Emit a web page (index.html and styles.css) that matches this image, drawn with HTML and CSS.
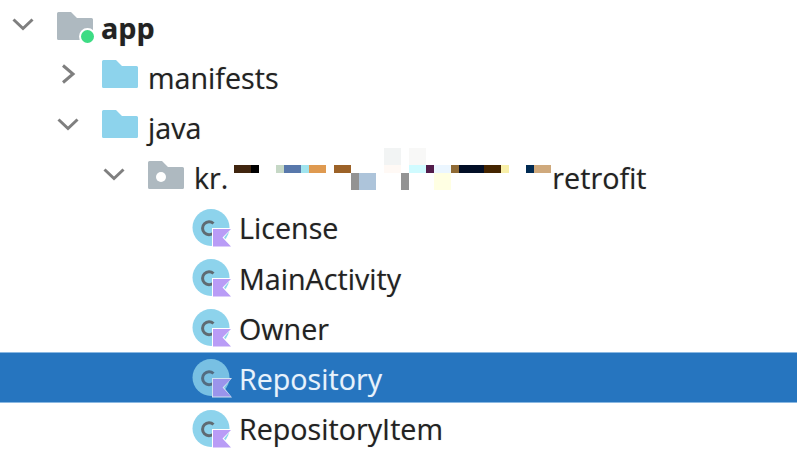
FILE: index.html
```html
<!DOCTYPE html>
<html lang="en">
<head>
    <meta charset="UTF-8">
    <title>Project tree</title>
    <link rel="stylesheet" href="styles.css">
</head>
<body>
<svg class="defs" width="0" height="0">
    <defs>
        <symbol id="folder" viewBox="0 0 36 28">
            <path d="M0 1.5Q0 0 1.5 0H14L20 6H34.5Q36 6 36 7.5V26.5Q36 28 34.5 28H1.5Q0 28 0 26.5Z"/>
        </symbol>
        <symbol id="down" viewBox="0 0 22 12">
            <path d="M1.5 1.5L11 10.5L20.5 1.5" fill="none" stroke="#7f7f7f" stroke-width="3"/>
        </symbol>
        <symbol id="right" viewBox="0 0 22 20">
            <path d="M6 1.5L16 10L6 18.5" fill="none" stroke="#7f7f7f" stroke-width="3"/>
        </symbol>
        <symbol id="kclass" viewBox="0 0 40 40">
            <circle cx="19" cy="18.5" r="18.5" fill="#8dd3ec"/>
            <path d="M21.5 14.5A6.5 6.5 0 1 0 21.5 24" fill="none" stroke="#5f6b72" stroke-width="3"/>
            <path d="M20 19H40L32 28.5L40 38.5H20Z" fill="#fff"/>
            <path d="M21 20H39L30.5 28.5L39 37.5H21Z" fill="#b99cf6"/>
        </symbol>
    </defs>
</svg>

<div class="tree">
    <div class="row depth0">
        <svg class="chevron"><use href="#down"/></svg>
        <span class="node module">
            <svg class="folder grey"><use href="#folder"/></svg>
            <span class="module-dot"></span>
        </span>
        <span class="label bold">app</span>
    </div>
    <div class="row depth1">
        <svg class="chevron"><use href="#right"/></svg>
        <span class="node">
            <svg class="folder blue"><use href="#folder"/></svg>
        </span>
        <span class="label">manifests</span>
    </div>
    <div class="row depth1">
        <svg class="chevron"><use href="#down"/></svg>
        <span class="node">
            <svg class="folder blue"><use href="#folder"/></svg>
        </span>
        <span class="label">java</span>
    </div>
    <div class="row depth2">
        <svg class="chevron"><use href="#down"/></svg>
        <span class="node">
            <svg class="folder grey"><use href="#folder"/></svg>
            <span class="package-hole"></span>
        </span>
        <span class="label">kr.</span>
        <svg class="mosaic" width="326" height="50" viewBox="0 0 326 50">
            <rect x="6" y="13" width="17" height="8" fill="#40250f"/>
            <rect x="23" y="13" width="8" height="8" fill="#000"/>
            <rect x="48" y="13" width="8" height="8" fill="#c6d8c6"/>
            <rect x="56" y="13" width="17" height="8" fill="#5878ab"/>
            <rect x="73" y="13" width="8" height="8" fill="#a0e4ee"/>
            <rect x="81" y="13" width="17" height="8" fill="#df9a50"/>
            <rect x="106" y="13" width="17" height="8" fill="#9c6228"/>
            <rect x="123" y="21" width="8" height="17" fill="#939393"/>
            <rect x="131" y="21" width="17" height="17" fill="#adc4da"/>
            <rect x="173" y="21" width="8" height="17" fill="#939393"/>
            <rect x="206" y="21" width="17" height="17" fill="#ffffe3"/>
            <rect x="156" y="-4" width="17" height="17" fill="#f2f4f4"/>
            <rect x="181" y="-4" width="17" height="17" fill="#f8f8f7"/>
            <rect x="156" y="13" width="17" height="8" fill="#fff9f5"/>
            <rect x="181" y="13" width="17" height="8" fill="#d0fbff"/>
            <rect x="198" y="13" width="8" height="8" fill="#521c4a"/>
            <rect x="206" y="13" width="17" height="8" fill="#ebf6ff"/>
            <rect x="223" y="13" width="8" height="8" fill="#8f6a35"/>
            <rect x="231" y="13" width="25" height="8" fill="#020e26"/>
            <rect x="256" y="13" width="17" height="8" fill="#442400"/>
            <rect x="273" y="13" width="8" height="8" fill="#f8efa8"/>
            <rect x="298" y="13" width="8" height="8" fill="#002a52"/>
            <rect x="306" y="13" width="17" height="8" fill="#cfa97c"/>
        </svg>
        <span class="label tail">retrofit</span>
    </div>
    <div class="row depth3">
        <svg class="kclass"><use href="#kclass"/></svg>
        <span class="label">License</span>
    </div>
    <div class="row depth3">
        <svg class="kclass"><use href="#kclass"/></svg>
        <span class="label">MainActivity</span>
    </div>
    <div class="row depth3">
        <svg class="kclass"><use href="#kclass"/></svg>
        <span class="label">Owner</span>
    </div>
    <div class="row depth3 selected">
        <svg class="kclass"><use href="#kclass"/></svg>
        <span class="label">Repository</span>
    </div>
    <div class="row depth3">
        <svg class="kclass"><use href="#kclass"/></svg>
        <span class="label">RepositoryItem</span>
    </div>
</div>
</body>
</html>
```

FILE: styles.css
```css
body {
    margin: 0;
    background-color: #fff;
    font-family: "Open Sans", "Noto Sans", sans-serif;
    color: #222;
    overflow: hidden;
}
.defs {
    position: absolute;
}
.tree {
    padding-top: 1px;
    width: 797px;
}
.row {
    display: flex;
    align-items: center;
    height: 50.2px;
    font-size: 28.7px;
}
.depth0 {
    padding-left: 12px;
}
.depth1 {
    padding-left: 57px;
}
.depth2 {
    padding-left: 103px;
}
.depth3 {
    padding-left: 192px;
}
.selected {
    background-color: #2675bf;
    color: #e8f2fb;
    box-shadow: inset 0 1px #8ab8e2, inset 0 -1px #8ab8e2;
}
.selected .kclass {
    opacity: 0.8;
}
.chevron {
    width: 22px;
    height: 20px;
    margin-right: 23px;
    margin-bottom: 5px;
    flex: none;
}
.node {
    position: relative;
    display: flex;
    flex: none;
    margin-bottom: 4px;
}
.module {
    margin-bottom: 0;
}
.folder {
    width: 36px;
    height: 28px;
    flex: none;
}
.grey {
    fill: #aeb9c0;
}
.blue {
    fill: #8dd3ec;
}
.module-dot {
    position: absolute;
    right: -3px;
    bottom: -5px;
    width: 13px;
    height: 13px;
    border: 2px solid #fff;
    border-radius: 50%;
    background-color: #3ddc84;
}
.package-hole {
    position: absolute;
    left: 8px;
    top: 11px;
    width: 10px;
    height: 10px;
    border-radius: 50%;
    background-color: #fff;
}
.kclass {
    width: 40px;
    height: 40px;
    flex: none;
    margin-right: 7px;
    margin-top: 4px;
}
.label {
    margin-left: 10px;
    margin-top: 2px;
    white-space: nowrap;
    text-shadow: 0 0 1px rgba(34, 34, 34, 0.35);
}
.kclass + .label {
    margin-left: 0;
}
.selected .label {
    text-shadow: 0 0 1px rgba(232, 242, 251, 0.35);
}
.bold {
    font-weight: 700;
    margin-left: 8px;
}
.mosaic {
    flex: none;
    overflow: visible;
}
.tail {
    margin-left: -2px;
}
```
